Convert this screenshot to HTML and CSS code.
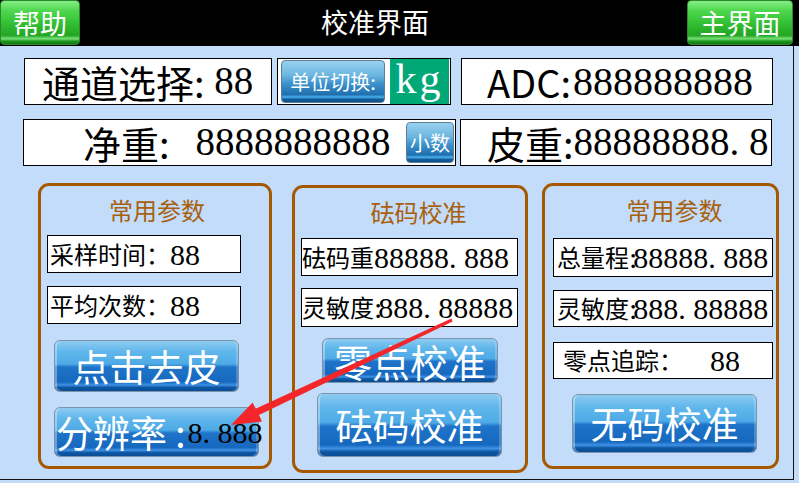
FILE: index.html
```html
<!DOCTYPE html>
<html lang="zh-CN">
<head>
<meta charset="utf-8">
<title>校准界面</title>
<link rel="stylesheet" href="styles.css">
</head>
<body>
<div class="screen">
  <header class="topbar">
    <div class="gbtn help">帮助</div>
    <div class="title">校准界面</div>
    <div class="gbtn home">主界面</div>
  </header>
  <main class="panel">
    <div class="row row1">
      <div class="box b-channel"><span class="cjk">通道选择:</span><span class="num big"> 88</span></div>
      <div class="box b-unit"><div class="sbtn unit-btn">单位切换:</div><div class="kg">kg</div></div>
      <div class="box b-adc"><span class="cjk">ADC:</span><span class="num big adc-num">888888888</span></div>
    </div>
    <div class="row row2">
      <div class="box b-net"><span class="cjk">净重:</span><span class="num big net-num">8888888888</span><div class="sbtn dec-btn">小数</div></div>
      <div class="box b-tare"><span class="cjk">皮重:</span><span class="num big">88888888. 8</span></div>
    </div>
    <div class="groups">
      <section class="group g-left">
        <div class="gtitle">常用参数</div>
        <div class="gbox gl-1"><span class="cjk">采样时间：</span><span class="num">88</span></div>
        <div class="gbox gl-2"><span class="cjk">平均次数：</span><span class="num">88</span></div>
        <div class="bbtn gl-3">点击去皮</div>
        <div class="bbtn gl-4"><span>分辨率 :</span><span class="num res">8. 888</span></div>
      </section>
      <section class="group g-mid">
        <div class="gtitle">砝码校准</div>
        <div class="gbox gm-1"><span class="cjk">砝码重</span><span class="num">88888. 888</span></div>
        <div class="gbox gm-2"><span class="cjk">灵敏度</span><span class="num colon">:</span><span class="num">888. 88888</span></div>
        <div class="bbtn gm-3">零点校准</div>
        <div class="bbtn gm-4">砝码校准</div>
      </section>
      <section class="group g-right">
        <div class="gtitle">常用参数</div>
        <div class="gbox gr-1"><span class="cjk">总量程</span><span class="num colon">:</span><span class="num">88888. 888</span></div>
        <div class="gbox gr-2"><span class="cjk">灵敏度</span><span class="num colon">:</span><span class="num">888. 88888</span></div>
        <div class="gbox gr-3"><span class="cjk">零点追踪：</span><span class="num track">88</span></div>
        <div class="bbtn gr-4">无码校准</div>
      </section>
    </div>
  </main>
  <svg class="arrow" width="799" height="483" viewBox="0 0 799 483">
    <polygon points="451.4,318.6 452.6,321.4 259,414.9 262,421.5 231,425 252.6,402.5 255.6,408.8" fill="#f3262a"/>
  </svg>
</div>
</body>
</html>
```
FILE: styles.css
```css
* { box-sizing: border-box; }
html, body { margin: 0; padding: 0; }
body {
  width: 799px;
  height: 483px;
  background: #c3dcf9;
  font-family: "Noto Sans CJK SC", "Noto Sans", sans-serif;
  overflow: hidden;
}
.screen { position: relative; width: 799px; height: 483px; }

.topbar {
  height: 46px;
  background: #000;
  display: flex;
  align-items: flex-start;
  padding-right: 6px;
}
.gbtn {
  height: 45px;
  color: #fff;
  font-size: 27px;
  line-height: 43px;
  text-align: center;
  border-radius: 4px;
  border: 1px solid #2b8a2b;
  background: linear-gradient(180deg, #86ee86 0%, #4fd84f 22%, #35c135 50%, #23a523 80%, #7ae07a 88%, #1f9a1f 93%, #167416 100%);
}
.help { width: 80px; }
.home { width: 106px; }
.title {
  flex: 1;
  color: #fff;
  font-size: 27px;
  line-height: 44px;
  text-align: center;
  padding-right: 17px;
}

.panel {
  width: 794px;
  height: 434px;
  border-right: 1px solid #111;
  border-bottom: 1px solid #111;
  overflow: hidden;
}
.row { display: flex; height: 47px; }
.row1 { margin: 12px 0 0 24px; }
.row2 { margin: 14px 0 0 23px; }

.box {
  height: 47px;
  background: #fff;
  border: 1px solid #000;
  display: flex;
  align-items: center;
  white-space: nowrap;
  overflow: hidden;
  line-height: 1.1;
}
.cjk { font-family: "Noto Sans CJK SC", sans-serif; }
.num { font-family: "Liberation Serif", "Times New Roman", serif; }
.box .cjk { font-size: 38px; }
.big { font-size: 39px; white-space: pre; }
.adc-num { font-size: 40px; margin-left: 2px; }

.b-channel { width: 248px; padding-left: 17px; }
.b-unit { width: 174px; margin-left: 5px; padding-left: 3px; }
.b-adc { width: 312px; margin-left: 10px; padding-left: 25px; }
.b-net { width: 433px; padding-left: 59px; }
.net-num { margin-left: 26px; }
.b-tare { width: 312px; margin-left: 4px; padding-left: 26px; }

.sbtn {
  color: #fff;
  font-size: 20px;
  line-height: 1;
  display: flex;
  align-items: center;
  justify-content: center;
  border-radius: 4px;
  border: 1px solid #5d7f9c;
  background: linear-gradient(180deg, #9ad1ee 0%, #6cb6e0 35%, #3d92cc 55%, #1f6fae 82%, #4ab0ee 88%, #135e9c 93%, #0e5088 100%);
}
.unit-btn { width: 104px; height: 43px; }
.kg {
  width: 59px;
  height: 45px;
  margin-left: 5px;
  background: #00a878;
  color: #fff;
  font-family: "Liberation Serif", serif;
  font-size: 42px;
  letter-spacing: 3px;
  text-align: center;
  line-height: 40px;
}
.dec-btn { width: 48px; height: 41px; margin-left: auto; margin-right: 1px; }

.groups { display: flex; align-items: flex-start; margin-top: 17px; }
.group {
  display: flex;
  flex-direction: column;
  align-items: flex-start;
  border: 3px solid #a65800;
  border-radius: 11px;
}
.g-left { width: 234px; height: 286px; margin-left: 38px; }
.g-mid { width: 236px; height: 288px; margin-left: 20px; margin-top: 2px; }
.g-right { width: 237px; height: 286px; margin-left: 14px; }

.gtitle {
  align-self: stretch;
  color: #a8600e;
  font-size: 24px;
  line-height: 48px;
  text-align: center;
}
.g-left .gtitle { height: 49px; padding-left: 4px; }
.g-mid .gtitle { height: 50px; padding-left: 17px; }
.g-right .gtitle { height: 52px; padding-left: 28px; }

.gbox {
  background: #fff;
  border: 1px solid #000;
  display: flex;
  align-items: center;
  white-space: nowrap;
  overflow: hidden;
  line-height: 1.1;
}
.gbox .cjk { font-size: 24px; }
.gbox .num { font-size: 30px; white-space: pre; }
.gbox .colon { margin-right: -4px; }

.gl-1, .gl-2 { width: 194px; height: 38px; margin-left: 6px; padding-left: 2px; }
.gl-2 { margin-top: 13px; }
.gm-1, .gm-2 { width: 217px; margin-left: 6px; padding-left: 0; }
.gm-1 { height: 38px; }
.gm-2 { height: 39px; margin-top: 12px; }
.gr-1, .gr-2, .gr-3 { width: 220px; margin-left: 8px; padding-left: 3px; }
.gr-1 { height: 39px; }
.gr-2 { height: 37px; margin-top: 13px; }
.gr-3 { height: 37px; margin-top: 15px; padding-left: 9px; }
.track { margin-left: 27px; }

.bbtn {
  color: #fff;
  font-size: 37px;
  line-height: 1.1;
  display: flex;
  align-items: center;
  justify-content: center;
  white-space: nowrap;
  border-radius: 6px;
  border: 1px solid #7d93ab;
  background: linear-gradient(180deg, #8ccbf1 0%, #5fb6eb 22%, #4eaae6 46%, #1f74c9 52%, #1568bd 82%, #3f92e6 88%, #0d56a2 93%, #0a4e96 100%);
  box-shadow: inset 2px 0 0 rgba(255,255,255,0.35), inset -2px 0 0 rgba(255,255,255,0.2);
}
.gl-3 { width: 185px; height: 52px; margin-left: 13px; margin-top: 16px; }
.gl-4 { width: 205px; height: 50px; margin-left: 13px; margin-top: 15px; justify-content: flex-start; padding-left: 1px; }
.res { color: #000; font-size: 30px; white-space: pre; margin-left: 2px; }
.gm-3 { width: 176px; height: 45px; margin-left: 27px; margin-top: 11px; font-size: 38px; }
.gm-4 { width: 185px; height: 64px; margin-left: 22px; margin-top: 10px; }
.gr-4 { width: 185px; height: 59px; margin-left: 27px; margin-top: 15px; }

.arrow { position: absolute; left: 0; top: 0; pointer-events: none; }
```
